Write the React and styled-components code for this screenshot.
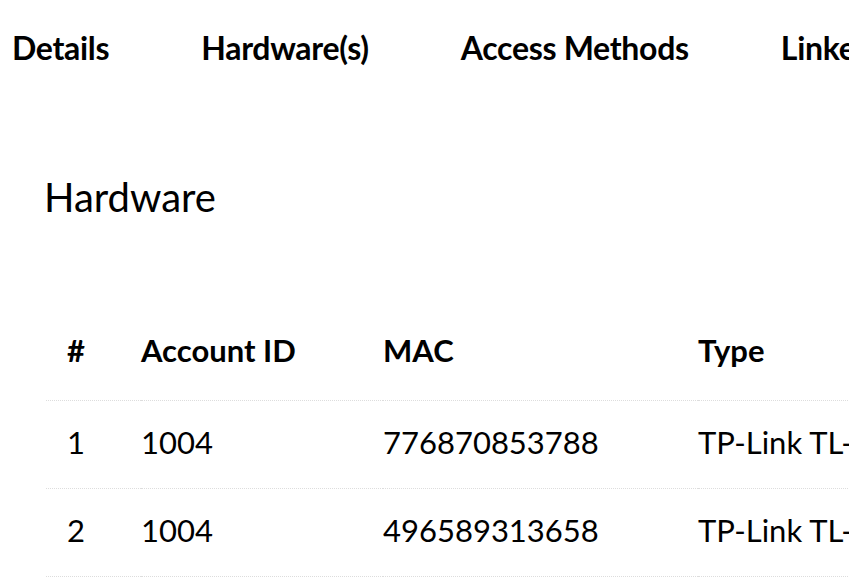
import React from "react";
import styled, { createGlobalStyle } from "styled-components";

const GlobalStyle = createGlobalStyle`
  body {
    margin: 0;
    background: #fff;
    font-family: Lato, "Open Sans", sans-serif;
    color: #000;
    overflow: hidden;
  }
`;

const tabs = ["Details", "Hardware(s)", "Access Methods", "Linked Accounts"];

const rows = [
  { id: 1, account: "1004", mac: "776870853788", type: "TP-Link TL-WR841N" },
  { id: 2, account: "1004", mac: "496589313658", type: "TP-Link TL-WR841N" },
];

export default function App() {
  return (
    <Page>
      <GlobalStyle />
      <TabBar>
        {tabs.map((t) => (
          <Tab key={t}>{t}</Tab>
        ))}
      </TabBar>
      <Section>
        <Title>Hardware</Title>
        <Table>
          <thead>
            <tr>
              <Th>#</Th>
              <Th>Account ID</Th>
              <Th>MAC</Th>
              <Th>Type</Th>
            </tr>
          </thead>
          <tbody>
            {rows.map((r) => (
              <tr key={r.id}>
                <Td>{r.id}</Td>
                <Td>{r.account}</Td>
                <Td>{r.mac}</Td>
                <Td>{r.type}</Td>
              </tr>
            ))}
          </tbody>
        </Table>
      </Section>
    </Page>
  );
}

const Page = styled.div`
  width: 849px;
  height: 580px;
  overflow: hidden;
`;

const TabBar = styled.nav`
  display: flex;
  gap: 92px;
  padding: 29px 0 0 12px;
  white-space: nowrap;
`;

const Tab = styled.div`
  font-size: 32px;
  font-weight: 700;
  line-height: 38px;
  letter-spacing: -0.3px;
`;

const Section = styled.section`
  padding: 0 0 0 44px;
`;

const Title = styled.h2`
  margin: 0;
  padding-top: 106px;
  font-size: 40px;
  font-weight: 400;
  line-height: 48px;
`;

const Table = styled.table`
  border-collapse: collapse;
  margin: 111px 0 0 2px;
  white-space: nowrap;
  width: 1000px;
  table-layout: fixed;

  th:nth-child(1),
  td:nth-child(1) {
    width: 74px;
    padding-left: 21px;
  }
  th:nth-child(2),
  td:nth-child(2) {
    width: 242px;
  }
  th:nth-child(3),
  td:nth-child(3) {
    width: 315px;
  }
`;

const Th = styled.th`
  text-align: left;
  font-size: 31px;
  font-weight: 700;
  line-height: 36px;
  padding: 0 0 32px 0;
  border-bottom: 1px dotted #ddd;
`;

const Td = styled.td`
  text-align: left;
  font-size: 31px;
  font-weight: 400;
  line-height: 36px;
  padding: 23px 0 28px 0;
  border-bottom: 1px dotted #ddd;
`;
